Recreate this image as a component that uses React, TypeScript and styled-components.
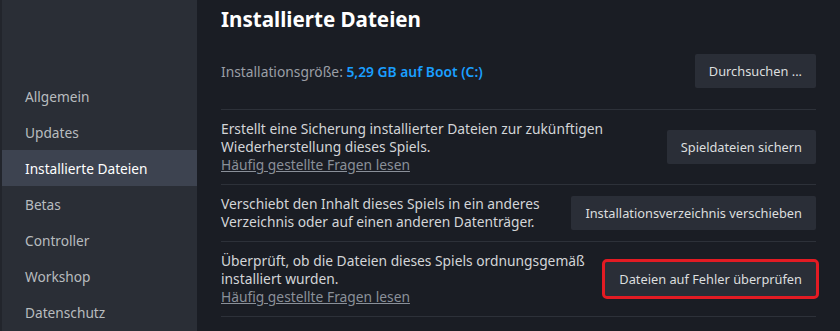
import styled, { createGlobalStyle } from "styled-components";

const GlobalStyle = createGlobalStyle`
    html, body {
        margin: 0;
        padding: 0;
        background-color: #1a1d24;
        font-family: "Noto Sans", "Open Sans", sans-serif;
    }
    * {
        box-sizing: border-box;
    }
`;

const Window = styled.div`
    display: flex;
    width: 840px;
    height: 331px;
    overflow: hidden;
    background-color: #1a1d24;
`;

const Sidebar = styled.nav`
    width: 197px;
    flex-shrink: 0;
    display: flex;
    flex-direction: column;
    padding-top: 78px;
    background-color: #2a2e36;
    border-left: 2px solid #22252c;
`;

const NavItem = styled.div<{ $active?: boolean }>`
    height: 36px;
    display: flex;
    align-items: center;
    padding-left: 23px;
    font-size: 13.7px;
    color: ${(props) => (props.$active ? "#ffffff" : "#b8bcbf")};
    background-color: ${(props) => (props.$active ? "#3d4350" : "transparent")};
`;

const Main = styled.main`
    flex: 1;
    min-width: 0;
    padding: 0 24px;
    display: flex;
    flex-direction: column;
`;

const Title = styled.h1`
    margin: 0;
    height: 44px;
    padding-top: 4px;
    font-size: 20.6px;
    font-weight: 700;
    line-height: 30px;
    color: #ffffff;
`;

const SizeRow = styled.div`
    display: flex;
    justify-content: space-between;
    align-items: center;
    padding: 10px 0 21px;
    border-bottom: 1px solid #2d3139;
`;

const SizeLabel = styled.span`
    font-size: 13.8px;
    color: #9a9fa6;
`;

const SizeValue = styled.span`
    color: #1a9fff;
    font-weight: 600;
`;

const Section = styled.div`
    display: flex;
    align-items: center;
    gap: 16px;
    padding: 10px 0;
    border-bottom: 1px solid #2d3139;
`;

const SectionText = styled.div`
    flex: 1;
    min-width: 0;
    display: flex;
    flex-direction: column;
    font-size: 13.8px;
    line-height: 18px;
    color: #d3d5d8;
`;

const FaqLink = styled.a`
    color: #8a9099;
    text-decoration: underline;
    cursor: pointer;
    align-self: flex-start;
`;

const Button = styled.button<{ $highlight?: boolean }>`
    flex-shrink: 0;
    height: 34px;
    padding: 0 14px;
    border: 0;
    border-radius: 2px;
    background-color: #2a2e37;
    color: #dcdedf;
    font-family: inherit;
    font-size: 12.8px;
    cursor: pointer;
    outline: ${(props) => (props.$highlight ? "3px solid #e31b23" : "none")};
    outline-offset: 0;
`;

const navItems = ["Allgemein", "Updates", "Installierte Dateien", "Betas", "Controller", "Workshop", "Datenschutz"];

function App() {
    return (
        <>
            <GlobalStyle />
            <Window>
                <Sidebar>
                    {navItems.map((item) => (
                        <NavItem key={item} $active={item === "Installierte Dateien"}>{item}</NavItem>
                    ))}
                </Sidebar>
                <Main>
                    <Title>Installierte Dateien</Title>
                    <SizeRow>
                        <SizeLabel>Installationsgröße: <SizeValue>5,29 GB auf Boot (C:)</SizeValue></SizeLabel>
                        <Button type="button">Durchsuchen ...</Button>
                    </SizeRow>
                    <Section>
                        <SectionText>
                            <span>Erstellt eine Sicherung installierter Dateien zur zukünftigen Wiederherstellung dieses Spiels.</span>
                            <FaqLink>Häufig gestellte Fragen lesen</FaqLink>
                        </SectionText>
                        <Button type="button">Spieldateien sichern</Button>
                    </Section>
                    <Section>
                        <SectionText>
                            <span>Verschiebt den Inhalt dieses Spiels in ein anderes Verzeichnis oder auf einen anderen Datenträger.</span>
                        </SectionText>
                        <Button type="button">Installationsverzeichnis verschieben</Button>
                    </Section>
                    <Section>
                        <SectionText>
                            <span>Überprüft, ob die Dateien dieses Spiels ordnungsgemäß installiert wurden.</span>
                            <FaqLink>Häufig gestellte Fragen lesen</FaqLink>
                        </SectionText>
                        <Button type="button" $highlight>Dateien auf Fehler überprüfen</Button>
                    </Section>
                </Main>
            </Window>
        </>
    );
}

export default App;
